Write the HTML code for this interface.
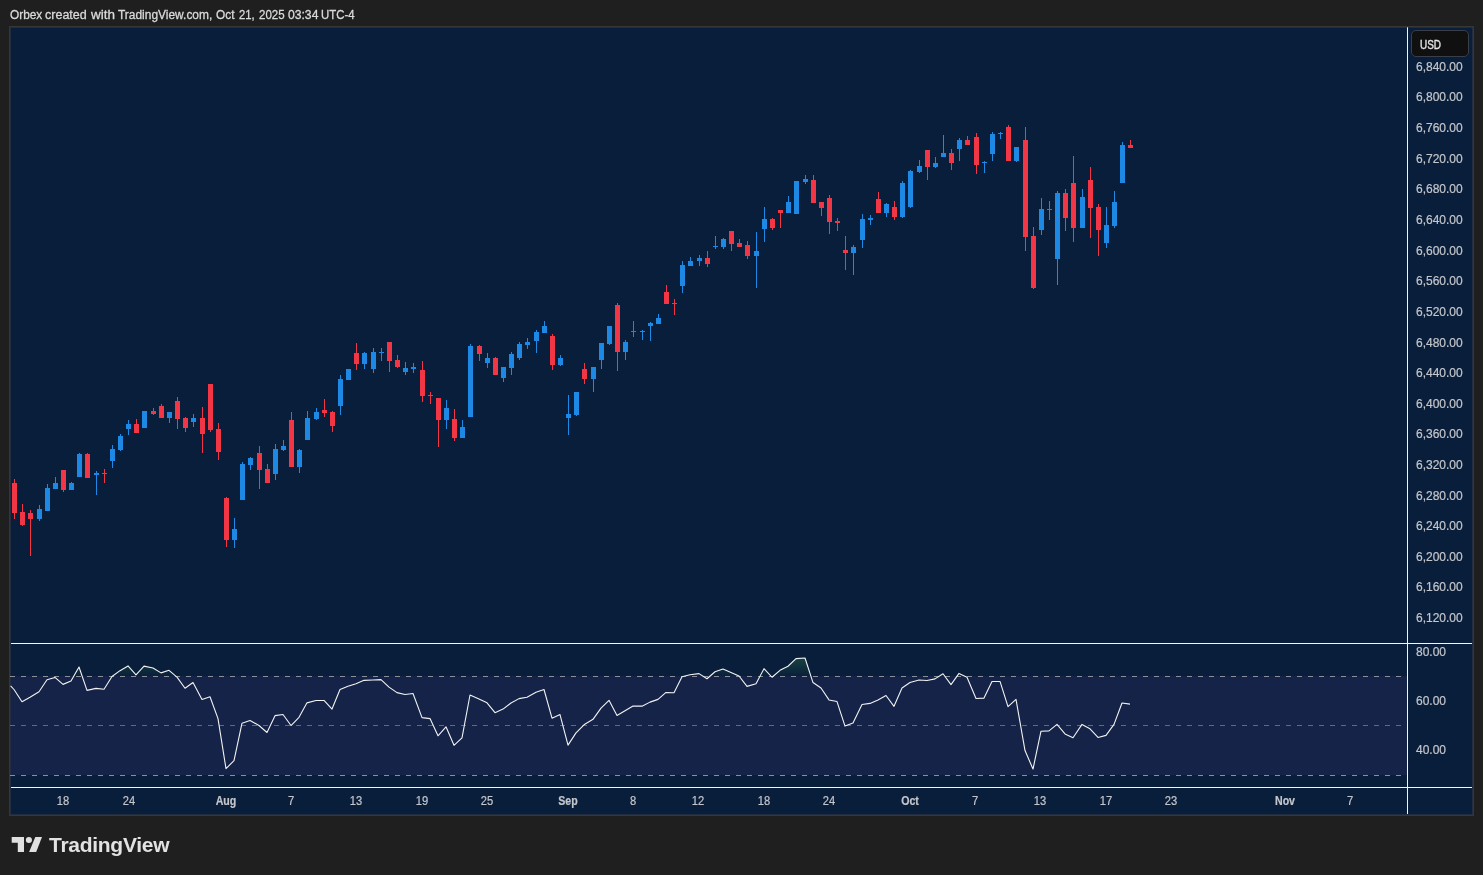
<!DOCTYPE html>
<html><head><meta charset="utf-8"><title>Chart</title>
<style>
html,body{margin:0;padding:0;background:#1f1f1f;}
body{width:1483px;height:875px;position:relative;overflow:hidden;font-family:"Liberation Sans",sans-serif;}
#hdr{position:absolute;left:0;top:7.4px;font-size:12.5px;color:#dadada;white-space:nowrap;line-height:16px;-webkit-text-stroke:0.3px #dadada}
#hdr span{position:absolute;top:0;transform-origin:0 0;white-space:nowrap}
#chart{position:absolute;left:9px;top:26px;width:1463px;height:788px;background:#091e3a;border:1px solid #363636;box-shadow:inset 0 0 0 1px #222d3f;}
svg{position:absolute;left:0;top:0}
.pl{position:absolute;left:1416px;font-size:12px;line-height:16px;color:#c4c6cb;white-space:nowrap;-webkit-text-stroke:0.2px #c4c6cb}
.tl{position:absolute;top:793px;width:60px;text-align:center;font-size:12px;line-height:16px;color:#c4c6cb;white-space:nowrap;-webkit-text-stroke:0.2px #c4c6cb}
.tl{transform:scaleX(0.93)}
.tl.b{font-weight:bold;transform:scaleX(0.885)}
#usd{position:absolute;left:1410.6px;top:30px;width:56.8px;height:25.4px;border:1px solid #3a3e48;border-radius:5px;background:#101011;}
#usd span{position:absolute;left:8.6px;top:5.5px;font-size:12px;line-height:16px;color:#e4e4e4;transform:scaleX(0.83);transform-origin:0 0;-webkit-text-stroke:0.35px #e4e4e4}
#logo{position:absolute;left:49px;top:832.7px;font-size:21px;line-height:24px;font-weight:bold;color:#e2e2e2;white-space:nowrap;letter-spacing:-0.28px}
#wrap{position:absolute;left:0;top:0;width:1483px;height:875px;will-change:transform}
</style></head><body><div id="wrap">
<div id="hdr"><span style="left:9.90px;transform:scaleX(0.9486)">Orbex</span> <span style="left:45.03px;transform:scaleX(1.0018)">created</span> <span style="left:90.60px;transform:scaleX(1.0803)">with</span> <span style="left:118.15px;transform:scaleX(0.9555)">TradingView.com,</span> <span style="left:215.96px;transform:scaleX(0.9481)">Oct</span> <span style="left:239.07px;transform:scaleX(0.9046)">21,</span> <span style="left:259.07px;transform:scaleX(0.9213)">2025</span> <span style="left:287.70px;transform:scaleX(0.9711)">03:34</span> <span style="left:320.89px;transform:scaleX(0.9129)">UTC-4</span></div>
<div id="chart"></div>
<svg width="1483" height="875" viewBox="0 0 1483 875">
<defs>
<linearGradient id="g" x1="0" y1="656" x2="0" y2="676.5" gradientUnits="userSpaceOnUse"><stop offset="0" stop-color="#2e7d4f" stop-opacity="0.43"/><stop offset="1" stop-color="#2e7d4f" stop-opacity="0"/></linearGradient>
<clipPath id="c70"><rect x="11" y="644" width="1396" height="32.5"/></clipPath>
</defs>
<rect x="11" y="676.0" width="1396" height="99.0" fill="#152348"/>
<path d="M10.60,676.5 L10.60,685.84 L14.00,689.50 L22.00,701.75 L30.00,697.18 L39.00,691.69 L47.00,679.81 L55.00,677.43 L63.00,684.38 L71.00,681.09 L79.00,667.00 L87.00,690.41 L96.00,688.40 L104.00,689.32 L112.00,676.51 L120.00,670.66 L128.00,665.91 L136.00,674.87 L144.00,666.09 L153.00,667.92 L161.00,672.86 L169.00,670.30 L177.00,677.06 L185.00,688.22 L193.00,682.55 L202.00,699.56 L210.00,696.81 L218.00,718.58 L226.00,768.69 L234.00,760.64 L242.00,723.15 L250.00,720.41 L259.00,725.53 L267.00,732.48 L275.00,715.65 L283.00,714.55 L291.00,725.53 L299.00,717.30 L307.00,702.85 L316.00,700.47 L324.00,700.47 L332.00,709.07 L340.00,689.50 L348.00,686.21 L356.00,683.65 L364.00,680.35 L373.00,679.99 L381.00,679.62 L389.00,687.12 L397.00,692.61 L405.00,694.44 L413.00,693.52 L422.00,717.66 L430.00,718.58 L438.00,735.77 L446.00,726.81 L454.00,745.28 L462.00,737.78 L470.00,694.99 L479.00,699.01 L487.00,702.85 L495.00,712.72 L503.00,709.07 L511.00,703.03 L519.00,698.64 L527.00,697.18 L536.00,692.24 L544.00,689.50 L552.00,718.21 L560.00,714.55 L568.00,745.10 L576.00,732.84 L584.00,724.80 L593.00,719.31 L601.00,708.15 L609.00,700.29 L617.00,715.47 L625.00,710.71 L633.00,705.96 L642.00,706.14 L650.00,702.12 L658.00,699.37 L666.00,692.43 L674.00,692.79 L682.00,676.70 L690.00,674.69 L699.00,673.59 L707.00,678.71 L715.00,671.76 L723.00,669.02 L731.00,672.49 L739.00,675.97 L747.00,686.39 L756.00,683.83 L764.00,668.65 L772.00,677.25 L780.00,670.30 L788.00,666.27 L796.00,658.59 L805.00,658.04 L813.00,682.55 L821.00,688.04 L829.00,699.92 L837.00,701.57 L845.00,726.08 L853.00,722.97 L862.00,704.50 L870.00,703.40 L878.00,699.92 L886.00,695.53 L894.00,706.32 L902.00,688.04 L910.00,682.55 L919.00,679.99 L927.00,680.54 L935.00,678.89 L943.00,673.77 L951.00,684.56 L959.00,673.41 L967.00,677.25 L976.00,698.46 L984.00,698.09 L992.00,681.45 L1000.00,681.45 L1008.00,706.69 L1016.00,699.37 L1025.00,750.58 L1033.00,769.05 L1041.00,731.20 L1049.00,730.83 L1057.00,724.43 L1065.00,733.94 L1073.00,737.78 L1082.00,724.43 L1090.00,728.82 L1098.00,737.41 L1106.00,735.40 L1114.00,724.43 L1122.00,703.03 L1130.00,704.13 L1130.00,676.5 Z" fill="url(#g)" clip-path="url(#c70)"/>
<g stroke="#8a8f99" stroke-width="1" stroke-dasharray="5 6">
<line x1="10" x2="1407" y1="676.5" y2="676.5"/>
<line x1="10" x2="1407" y1="725.5" y2="725.5" stroke="#626a7d"/>
<line x1="10" x2="1407" y1="775.5" y2="775.5"/>
</g>
<rect x="14" y="479" width="1" height="40" fill="#f23645"/>
<rect x="12" y="483" width="5" height="30" fill="#f23645"/>
<rect x="22" y="504" width="1" height="22" fill="#f23645"/>
<rect x="20" y="512" width="5" height="13" fill="#f23645"/>
<rect x="30" y="510" width="1" height="46" fill="#f23645"/>
<rect x="28" y="513" width="5" height="6" fill="#f23645"/>
<rect x="39" y="505" width="1" height="16" fill="#1e88e5"/>
<rect x="37" y="509" width="5" height="10" fill="#1e88e5"/>
<rect x="47" y="484" width="1" height="27" fill="#1e88e5"/>
<rect x="45" y="488" width="5" height="23" fill="#1e88e5"/>
<rect x="55" y="477" width="1" height="12" fill="#1e88e5"/>
<rect x="53" y="483" width="5" height="6" fill="#1e88e5"/>
<rect x="63" y="470" width="1" height="22" fill="#f23645"/>
<rect x="61" y="470" width="5" height="20" fill="#f23645"/>
<rect x="71" y="482" width="1" height="8" fill="#1e88e5"/>
<rect x="69" y="483" width="5" height="7" fill="#1e88e5"/>
<rect x="79" y="453" width="1" height="24" fill="#1e88e5"/>
<rect x="77" y="454" width="5" height="23" fill="#1e88e5"/>
<rect x="87" y="453" width="1" height="25" fill="#f23645"/>
<rect x="85" y="454" width="5" height="24" fill="#f23645"/>
<rect x="96" y="471" width="1" height="24" fill="#1e88e5"/>
<rect x="94" y="473" width="5" height="2" fill="#1e88e5"/>
<rect x="104" y="469" width="1" height="14" fill="#f23645"/>
<rect x="102" y="473" width="5" height="1" fill="#f23645"/>
<rect x="112" y="445" width="1" height="23" fill="#1e88e5"/>
<rect x="110" y="449" width="5" height="12" fill="#1e88e5"/>
<rect x="120" y="434" width="1" height="17" fill="#1e88e5"/>
<rect x="118" y="436" width="5" height="14" fill="#1e88e5"/>
<rect x="128" y="420" width="1" height="15" fill="#1e88e5"/>
<rect x="126" y="424" width="5" height="5" fill="#1e88e5"/>
<rect x="136" y="419" width="1" height="14" fill="#f23645"/>
<rect x="134" y="424" width="5" height="9" fill="#f23645"/>
<rect x="144" y="411" width="1" height="17" fill="#1e88e5"/>
<rect x="142" y="411" width="5" height="17" fill="#1e88e5"/>
<rect x="153" y="408" width="1" height="7" fill="#f23645"/>
<rect x="151" y="411" width="5" height="3" fill="#f23645"/>
<rect x="161" y="404" width="1" height="14" fill="#f23645"/>
<rect x="159" y="406" width="5" height="12" fill="#f23645"/>
<rect x="169" y="412" width="1" height="11" fill="#1e88e5"/>
<rect x="167" y="412" width="5" height="6" fill="#1e88e5"/>
<rect x="177" y="397" width="1" height="32" fill="#f23645"/>
<rect x="175" y="401" width="5" height="18" fill="#f23645"/>
<rect x="185" y="417" width="1" height="15" fill="#f23645"/>
<rect x="183" y="418" width="5" height="10" fill="#f23645"/>
<rect x="193" y="414" width="1" height="13" fill="#1e88e5"/>
<rect x="191" y="418" width="5" height="4" fill="#1e88e5"/>
<rect x="202" y="407" width="1" height="46" fill="#f23645"/>
<rect x="200" y="418" width="5" height="16" fill="#f23645"/>
<rect x="210" y="384" width="1" height="48" fill="#f23645"/>
<rect x="208" y="384" width="5" height="46" fill="#f23645"/>
<rect x="218" y="423" width="1" height="37" fill="#f23645"/>
<rect x="216" y="429" width="5" height="23" fill="#f23645"/>
<rect x="226" y="497" width="1" height="50" fill="#f23645"/>
<rect x="224" y="498" width="5" height="42" fill="#f23645"/>
<rect x="234" y="518" width="1" height="30" fill="#1e88e5"/>
<rect x="232" y="529" width="5" height="11" fill="#1e88e5"/>
<rect x="242" y="462" width="1" height="38" fill="#1e88e5"/>
<rect x="240" y="464" width="5" height="36" fill="#1e88e5"/>
<rect x="250" y="457" width="1" height="13" fill="#1e88e5"/>
<rect x="248" y="458" width="5" height="7" fill="#1e88e5"/>
<rect x="259" y="446" width="1" height="43" fill="#f23645"/>
<rect x="257" y="453" width="5" height="17" fill="#f23645"/>
<rect x="267" y="464" width="1" height="19" fill="#f23645"/>
<rect x="265" y="469" width="5" height="14" fill="#f23645"/>
<rect x="275" y="444" width="1" height="36" fill="#1e88e5"/>
<rect x="273" y="449" width="5" height="25" fill="#1e88e5"/>
<rect x="283" y="440" width="1" height="11" fill="#1e88e5"/>
<rect x="281" y="446" width="5" height="4" fill="#1e88e5"/>
<rect x="291" y="412" width="1" height="55" fill="#f23645"/>
<rect x="289" y="420" width="5" height="47" fill="#f23645"/>
<rect x="299" y="449" width="1" height="24" fill="#1e88e5"/>
<rect x="297" y="450" width="5" height="17" fill="#1e88e5"/>
<rect x="307" y="411" width="1" height="29" fill="#1e88e5"/>
<rect x="305" y="418" width="5" height="22" fill="#1e88e5"/>
<rect x="316" y="408" width="1" height="12" fill="#1e88e5"/>
<rect x="314" y="412" width="5" height="7" fill="#1e88e5"/>
<rect x="324" y="399" width="1" height="18" fill="#f23645"/>
<rect x="322" y="410" width="5" height="3" fill="#f23645"/>
<rect x="332" y="411" width="1" height="21" fill="#f23645"/>
<rect x="330" y="412" width="5" height="14" fill="#f23645"/>
<rect x="340" y="375" width="1" height="40" fill="#1e88e5"/>
<rect x="338" y="379" width="5" height="27" fill="#1e88e5"/>
<rect x="348" y="369" width="1" height="11" fill="#1e88e5"/>
<rect x="346" y="369" width="5" height="11" fill="#1e88e5"/>
<rect x="356" y="343" width="1" height="27" fill="#f23645"/>
<rect x="354" y="353" width="5" height="11" fill="#f23645"/>
<rect x="364" y="352" width="1" height="17" fill="#1e88e5"/>
<rect x="362" y="353" width="5" height="11" fill="#1e88e5"/>
<rect x="373" y="348" width="1" height="25" fill="#1e88e5"/>
<rect x="371" y="352" width="5" height="17" fill="#1e88e5"/>
<rect x="381" y="348" width="1" height="13" fill="#1e88e5"/>
<rect x="379" y="352" width="5" height="1" fill="#1e88e5"/>
<rect x="389" y="342" width="1" height="30" fill="#f23645"/>
<rect x="387" y="342" width="5" height="19" fill="#f23645"/>
<rect x="397" y="355" width="1" height="13" fill="#f23645"/>
<rect x="395" y="360" width="5" height="7" fill="#f23645"/>
<rect x="405" y="362" width="1" height="13" fill="#1e88e5"/>
<rect x="403" y="368" width="5" height="4" fill="#1e88e5"/>
<rect x="413" y="363" width="1" height="10" fill="#1e88e5"/>
<rect x="411" y="367" width="5" height="2" fill="#1e88e5"/>
<rect x="422" y="361" width="1" height="41" fill="#f23645"/>
<rect x="420" y="370" width="5" height="26" fill="#f23645"/>
<rect x="430" y="392" width="1" height="12" fill="#f23645"/>
<rect x="428" y="395" width="5" height="1" fill="#f23645"/>
<rect x="438" y="398" width="1" height="49" fill="#f23645"/>
<rect x="436" y="398" width="5" height="22" fill="#f23645"/>
<rect x="446" y="400" width="1" height="29" fill="#1e88e5"/>
<rect x="444" y="408" width="5" height="12" fill="#1e88e5"/>
<rect x="454" y="409" width="1" height="32" fill="#f23645"/>
<rect x="452" y="419" width="5" height="19" fill="#f23645"/>
<rect x="462" y="420" width="1" height="18" fill="#1e88e5"/>
<rect x="460" y="427" width="5" height="11" fill="#1e88e5"/>
<rect x="470" y="344" width="1" height="73" fill="#1e88e5"/>
<rect x="468" y="346" width="5" height="71" fill="#1e88e5"/>
<rect x="479" y="345" width="1" height="16" fill="#f23645"/>
<rect x="477" y="346" width="5" height="8" fill="#f23645"/>
<rect x="487" y="353" width="1" height="15" fill="#1e88e5"/>
<rect x="485" y="358" width="5" height="5" fill="#1e88e5"/>
<rect x="495" y="357" width="1" height="18" fill="#f23645"/>
<rect x="493" y="358" width="5" height="17" fill="#f23645"/>
<rect x="503" y="367" width="1" height="15" fill="#1e88e5"/>
<rect x="501" y="367" width="5" height="11" fill="#1e88e5"/>
<rect x="511" y="352" width="1" height="23" fill="#1e88e5"/>
<rect x="509" y="354" width="5" height="14" fill="#1e88e5"/>
<rect x="519" y="342" width="1" height="18" fill="#1e88e5"/>
<rect x="517" y="344" width="5" height="14" fill="#1e88e5"/>
<rect x="527" y="338" width="1" height="11" fill="#1e88e5"/>
<rect x="525" y="342" width="5" height="3" fill="#1e88e5"/>
<rect x="536" y="330" width="1" height="23" fill="#1e88e5"/>
<rect x="534" y="332" width="5" height="9" fill="#1e88e5"/>
<rect x="544" y="321" width="1" height="12" fill="#1e88e5"/>
<rect x="542" y="326" width="5" height="7" fill="#1e88e5"/>
<rect x="552" y="334" width="1" height="36" fill="#f23645"/>
<rect x="550" y="336" width="5" height="29" fill="#f23645"/>
<rect x="560" y="355" width="1" height="11" fill="#1e88e5"/>
<rect x="558" y="358" width="5" height="7" fill="#1e88e5"/>
<rect x="568" y="395" width="1" height="40" fill="#1e88e5"/>
<rect x="566" y="414" width="5" height="4" fill="#1e88e5"/>
<rect x="576" y="392" width="1" height="24" fill="#1e88e5"/>
<rect x="574" y="392" width="5" height="23" fill="#1e88e5"/>
<rect x="584" y="363" width="1" height="21" fill="#f23645"/>
<rect x="582" y="369" width="5" height="10" fill="#f23645"/>
<rect x="593" y="367" width="1" height="25" fill="#1e88e5"/>
<rect x="591" y="367" width="5" height="12" fill="#1e88e5"/>
<rect x="601" y="343" width="1" height="26" fill="#1e88e5"/>
<rect x="599" y="343" width="5" height="17" fill="#1e88e5"/>
<rect x="609" y="326" width="1" height="19" fill="#1e88e5"/>
<rect x="607" y="326" width="5" height="18" fill="#1e88e5"/>
<rect x="617" y="303" width="1" height="68" fill="#f23645"/>
<rect x="615" y="305" width="5" height="47" fill="#f23645"/>
<rect x="625" y="340" width="1" height="20" fill="#1e88e5"/>
<rect x="623" y="342" width="5" height="10" fill="#1e88e5"/>
<rect x="633" y="321" width="1" height="16" fill="#f23645"/>
<rect x="631" y="331" width="5" height="1" fill="#f23645"/>
<rect x="642" y="330" width="1" height="10" fill="#1e88e5"/>
<rect x="640" y="331" width="5" height="1" fill="#1e88e5"/>
<rect x="650" y="322" width="1" height="19" fill="#1e88e5"/>
<rect x="648" y="323" width="5" height="3" fill="#1e88e5"/>
<rect x="658" y="314" width="1" height="10" fill="#1e88e5"/>
<rect x="656" y="318" width="5" height="6" fill="#1e88e5"/>
<rect x="666" y="285" width="1" height="19" fill="#f23645"/>
<rect x="664" y="292" width="5" height="12" fill="#f23645"/>
<rect x="674" y="299" width="1" height="16" fill="#f23645"/>
<rect x="672" y="303" width="5" height="1" fill="#f23645"/>
<rect x="682" y="261" width="1" height="32" fill="#1e88e5"/>
<rect x="680" y="265" width="5" height="21" fill="#1e88e5"/>
<rect x="690" y="257" width="1" height="9" fill="#1e88e5"/>
<rect x="688" y="261" width="5" height="5" fill="#1e88e5"/>
<rect x="699" y="255" width="1" height="11" fill="#1e88e5"/>
<rect x="697" y="258" width="5" height="3" fill="#1e88e5"/>
<rect x="707" y="251" width="1" height="16" fill="#f23645"/>
<rect x="705" y="258" width="5" height="6" fill="#f23645"/>
<rect x="715" y="236" width="1" height="13" fill="#1e88e5"/>
<rect x="713" y="246" width="5" height="1" fill="#1e88e5"/>
<rect x="723" y="238" width="1" height="11" fill="#1e88e5"/>
<rect x="721" y="239" width="5" height="8" fill="#1e88e5"/>
<rect x="731" y="231" width="1" height="20" fill="#f23645"/>
<rect x="729" y="231" width="5" height="13" fill="#f23645"/>
<rect x="739" y="239" width="1" height="8" fill="#f23645"/>
<rect x="737" y="243" width="5" height="4" fill="#f23645"/>
<rect x="747" y="241" width="1" height="18" fill="#f23645"/>
<rect x="745" y="245" width="5" height="11" fill="#f23645"/>
<rect x="756" y="232" width="1" height="56" fill="#1e88e5"/>
<rect x="754" y="251" width="5" height="5" fill="#1e88e5"/>
<rect x="764" y="207" width="1" height="35" fill="#1e88e5"/>
<rect x="762" y="219" width="5" height="10" fill="#1e88e5"/>
<rect x="772" y="218" width="1" height="12" fill="#f23645"/>
<rect x="770" y="219" width="5" height="9" fill="#f23645"/>
<rect x="780" y="210" width="1" height="18" fill="#f23645"/>
<rect x="778" y="210" width="5" height="3" fill="#f23645"/>
<rect x="788" y="196" width="1" height="17" fill="#1e88e5"/>
<rect x="786" y="202" width="5" height="11" fill="#1e88e5"/>
<rect x="796" y="181" width="1" height="33" fill="#1e88e5"/>
<rect x="794" y="181" width="5" height="33" fill="#1e88e5"/>
<rect x="805" y="175" width="1" height="9" fill="#1e88e5"/>
<rect x="803" y="179" width="5" height="3" fill="#1e88e5"/>
<rect x="813" y="175" width="1" height="28" fill="#f23645"/>
<rect x="811" y="180" width="5" height="23" fill="#f23645"/>
<rect x="821" y="202" width="1" height="14" fill="#f23645"/>
<rect x="819" y="202" width="5" height="6" fill="#f23645"/>
<rect x="829" y="195" width="1" height="39" fill="#f23645"/>
<rect x="827" y="198" width="5" height="24" fill="#f23645"/>
<rect x="837" y="218" width="1" height="13" fill="#f23645"/>
<rect x="835" y="221" width="5" height="2" fill="#f23645"/>
<rect x="845" y="236" width="1" height="34" fill="#f23645"/>
<rect x="843" y="250" width="5" height="3" fill="#f23645"/>
<rect x="853" y="245" width="1" height="30" fill="#1e88e5"/>
<rect x="851" y="247" width="5" height="6" fill="#1e88e5"/>
<rect x="862" y="214" width="1" height="34" fill="#1e88e5"/>
<rect x="860" y="219" width="5" height="21" fill="#1e88e5"/>
<rect x="870" y="215" width="1" height="10" fill="#1e88e5"/>
<rect x="868" y="218" width="5" height="2" fill="#1e88e5"/>
<rect x="878" y="192" width="1" height="21" fill="#f23645"/>
<rect x="876" y="199" width="5" height="14" fill="#f23645"/>
<rect x="886" y="203" width="1" height="14" fill="#1e88e5"/>
<rect x="884" y="204" width="5" height="9" fill="#1e88e5"/>
<rect x="894" y="201" width="1" height="19" fill="#f23645"/>
<rect x="892" y="207" width="5" height="10" fill="#f23645"/>
<rect x="902" y="181" width="1" height="37" fill="#1e88e5"/>
<rect x="900" y="183" width="5" height="34" fill="#1e88e5"/>
<rect x="910" y="170" width="1" height="38" fill="#1e88e5"/>
<rect x="908" y="171" width="5" height="36" fill="#1e88e5"/>
<rect x="919" y="160" width="1" height="13" fill="#1e88e5"/>
<rect x="917" y="166" width="5" height="6" fill="#1e88e5"/>
<rect x="927" y="150" width="1" height="30" fill="#f23645"/>
<rect x="925" y="150" width="5" height="17" fill="#f23645"/>
<rect x="935" y="157" width="1" height="11" fill="#1e88e5"/>
<rect x="933" y="163" width="5" height="4" fill="#1e88e5"/>
<rect x="943" y="135" width="1" height="22" fill="#1e88e5"/>
<rect x="941" y="153" width="5" height="4" fill="#1e88e5"/>
<rect x="951" y="149" width="1" height="21" fill="#f23645"/>
<rect x="949" y="153" width="5" height="10" fill="#f23645"/>
<rect x="959" y="138" width="1" height="23" fill="#1e88e5"/>
<rect x="957" y="140" width="5" height="9" fill="#1e88e5"/>
<rect x="967" y="136" width="1" height="9" fill="#f23645"/>
<rect x="965" y="140" width="5" height="5" fill="#f23645"/>
<rect x="976" y="133" width="1" height="41" fill="#f23645"/>
<rect x="974" y="137" width="5" height="28" fill="#f23645"/>
<rect x="984" y="161" width="1" height="12" fill="#1e88e5"/>
<rect x="982" y="162" width="5" height="1" fill="#1e88e5"/>
<rect x="992" y="132" width="1" height="29" fill="#1e88e5"/>
<rect x="990" y="134" width="5" height="20" fill="#1e88e5"/>
<rect x="1000" y="132" width="1" height="7" fill="#1e88e5"/>
<rect x="998" y="133" width="5" height="1" fill="#1e88e5"/>
<rect x="1008" y="125" width="1" height="36" fill="#f23645"/>
<rect x="1006" y="127" width="5" height="34" fill="#f23645"/>
<rect x="1016" y="147" width="1" height="15" fill="#1e88e5"/>
<rect x="1014" y="147" width="5" height="14" fill="#1e88e5"/>
<rect x="1025" y="127" width="1" height="124" fill="#f23645"/>
<rect x="1023" y="140" width="5" height="97" fill="#f23645"/>
<rect x="1033" y="227" width="1" height="62" fill="#f23645"/>
<rect x="1031" y="236" width="5" height="52" fill="#f23645"/>
<rect x="1041" y="198" width="1" height="37" fill="#1e88e5"/>
<rect x="1039" y="209" width="5" height="21" fill="#1e88e5"/>
<rect x="1049" y="201" width="1" height="19" fill="#1e88e5"/>
<rect x="1047" y="209" width="5" height="1" fill="#1e88e5"/>
<rect x="1057" y="191" width="1" height="94" fill="#1e88e5"/>
<rect x="1055" y="193" width="5" height="66" fill="#1e88e5"/>
<rect x="1065" y="189" width="1" height="42" fill="#f23645"/>
<rect x="1063" y="193" width="5" height="25" fill="#f23645"/>
<rect x="1073" y="156" width="1" height="86" fill="#f23645"/>
<rect x="1071" y="183" width="5" height="45" fill="#f23645"/>
<rect x="1082" y="189" width="1" height="39" fill="#1e88e5"/>
<rect x="1080" y="197" width="5" height="31" fill="#1e88e5"/>
<rect x="1090" y="167" width="1" height="71" fill="#f23645"/>
<rect x="1088" y="180" width="5" height="28" fill="#f23645"/>
<rect x="1098" y="204" width="1" height="52" fill="#f23645"/>
<rect x="1096" y="207" width="5" height="23" fill="#f23645"/>
<rect x="1106" y="207" width="1" height="41" fill="#1e88e5"/>
<rect x="1104" y="225" width="5" height="18" fill="#1e88e5"/>
<rect x="1114" y="191" width="1" height="37" fill="#1e88e5"/>
<rect x="1112" y="202" width="5" height="24" fill="#1e88e5"/>
<rect x="1122" y="142" width="1" height="41" fill="#1e88e5"/>
<rect x="1120" y="145" width="5" height="38" fill="#1e88e5"/>
<rect x="1130" y="140" width="1" height="8" fill="#f23645"/>
<rect x="1128" y="145" width="5" height="3" fill="#f23645"/>
<polyline points="10.60,685.84 14.00,689.50 22.00,701.75 30.00,697.18 39.00,691.69 47.00,679.81 55.00,677.43 63.00,684.38 71.00,681.09 79.00,667.00 87.00,690.41 96.00,688.40 104.00,689.32 112.00,676.51 120.00,670.66 128.00,665.91 136.00,674.87 144.00,666.09 153.00,667.92 161.00,672.86 169.00,670.30 177.00,677.06 185.00,688.22 193.00,682.55 202.00,699.56 210.00,696.81 218.00,718.58 226.00,768.69 234.00,760.64 242.00,723.15 250.00,720.41 259.00,725.53 267.00,732.48 275.00,715.65 283.00,714.55 291.00,725.53 299.00,717.30 307.00,702.85 316.00,700.47 324.00,700.47 332.00,709.07 340.00,689.50 348.00,686.21 356.00,683.65 364.00,680.35 373.00,679.99 381.00,679.62 389.00,687.12 397.00,692.61 405.00,694.44 413.00,693.52 422.00,717.66 430.00,718.58 438.00,735.77 446.00,726.81 454.00,745.28 462.00,737.78 470.00,694.99 479.00,699.01 487.00,702.85 495.00,712.72 503.00,709.07 511.00,703.03 519.00,698.64 527.00,697.18 536.00,692.24 544.00,689.50 552.00,718.21 560.00,714.55 568.00,745.10 576.00,732.84 584.00,724.80 593.00,719.31 601.00,708.15 609.00,700.29 617.00,715.47 625.00,710.71 633.00,705.96 642.00,706.14 650.00,702.12 658.00,699.37 666.00,692.43 674.00,692.79 682.00,676.70 690.00,674.69 699.00,673.59 707.00,678.71 715.00,671.76 723.00,669.02 731.00,672.49 739.00,675.97 747.00,686.39 756.00,683.83 764.00,668.65 772.00,677.25 780.00,670.30 788.00,666.27 796.00,658.59 805.00,658.04 813.00,682.55 821.00,688.04 829.00,699.92 837.00,701.57 845.00,726.08 853.00,722.97 862.00,704.50 870.00,703.40 878.00,699.92 886.00,695.53 894.00,706.32 902.00,688.04 910.00,682.55 919.00,679.99 927.00,680.54 935.00,678.89 943.00,673.77 951.00,684.56 959.00,673.41 967.00,677.25 976.00,698.46 984.00,698.09 992.00,681.45 1000.00,681.45 1008.00,706.69 1016.00,699.37 1025.00,750.58 1033.00,769.05 1041.00,731.20 1049.00,730.83 1057.00,724.43 1065.00,733.94 1073.00,737.78 1082.00,724.43 1090.00,728.82 1098.00,737.41 1106.00,735.40 1114.00,724.43 1122.00,703.03 1130.00,704.13" fill="none" stroke="#f2f2f2" stroke-width="1.1" stroke-linejoin="round"/>
<rect x="11" y="643" width="1461" height="1" fill="#f4f4f4"/>
<rect x="11" y="787" width="1461" height="1" fill="#f4f4f4"/>
<rect x="1407" y="27.3" width="1" height="786.7" fill="#f4f4f4"/>
<g fill="#e0e0e0">
<path d="M11.7 836.9H24V851.9H17.8V842.8H11.7Z"/>
<circle cx="28.9" cy="840" r="3.05"/>
<path d="M35.3 836.9H42L36.2 851.9H29.1Z"/>
</g>
</svg>
<div class="pl" style="top:59px">6,840.00</div><div class="pl" style="top:89px">6,800.00</div><div class="pl" style="top:120px">6,760.00</div><div class="pl" style="top:151px">6,720.00</div><div class="pl" style="top:181px">6,680.00</div><div class="pl" style="top:212px">6,640.00</div><div class="pl" style="top:243px">6,600.00</div><div class="pl" style="top:273px">6,560.00</div><div class="pl" style="top:304px">6,520.00</div><div class="pl" style="top:335px">6,480.00</div><div class="pl" style="top:365px">6,440.00</div><div class="pl" style="top:396px">6,400.00</div><div class="pl" style="top:426px">6,360.00</div><div class="pl" style="top:457px">6,320.00</div><div class="pl" style="top:488px">6,280.00</div><div class="pl" style="top:518px">6,240.00</div><div class="pl" style="top:549px">6,200.00</div><div class="pl" style="top:579px">6,160.00</div><div class="pl" style="top:610px">6,120.00</div><div class="pl" style="top:644px">80.00</div><div class="pl" style="top:693px">60.00</div><div class="pl" style="top:742px">40.00</div>
<div class="tl" style="left:33.4px">18</div><div class="tl" style="left:98.5px">24</div><div class="tl b" style="left:195.9px">Aug</div><div class="tl" style="left:260.5px">7</div><div class="tl" style="left:326.0px">13</div><div class="tl" style="left:391.5px">19</div><div class="tl" style="left:456.7px">25</div><div class="tl b" style="left:538.0px">Sep</div><div class="tl" style="left:603.1px">8</div><div class="tl" style="left:668.3px">12</div><div class="tl" style="left:733.8px">18</div><div class="tl" style="left:799.0px">24</div><div class="tl b" style="left:880.2px">Oct</div><div class="tl" style="left:945.0px">7</div><div class="tl" style="left:1010.4px">13</div><div class="tl" style="left:1075.7px">17</div><div class="tl" style="left:1141.0px">23</div><div class="tl b" style="left:1255.4px">Nov</div><div class="tl" style="left:1320.3px">7</div>
<div id="usd"><span>USD</span></div>
<div id="logo">TradingView</div>
</div></body></html>
